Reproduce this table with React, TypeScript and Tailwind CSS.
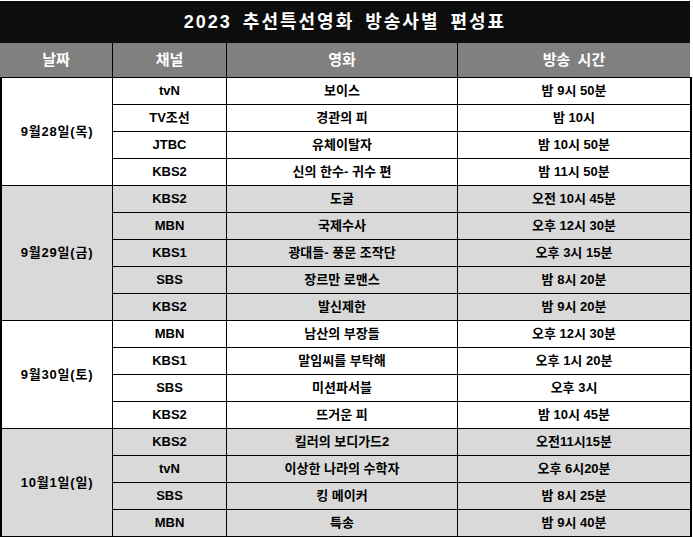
import React from "react";

type Row = { ch: string; movie: string; time: string };
type Group = { date: string; gray: boolean; rows: Row[] };

const groups: Group[] = [
  {
    date: "9월28일(목)",
    gray: false,
    rows: [
      { ch: "tvN", movie: "보이스", time: "밤 9시 50분" },
      { ch: "TV조선", movie: "경관의 피", time: "밤 10시" },
      { ch: "JTBC", movie: "유체이탈자", time: "밤 10시 50분" },
      { ch: "KBS2", movie: "신의 한수- 귀수 편", time: "밤 11시 50분" },
    ],
  },
  {
    date: "9월29일(금)",
    gray: true,
    rows: [
      { ch: "KBS2", movie: "도굴", time: "오전 10시 45분" },
      { ch: "MBN", movie: "국제수사", time: "오후 12시 30분" },
      { ch: "KBS1", movie: "광대들- 풍문 조작단", time: "오후 3시 15분" },
      { ch: "SBS", movie: "장르만 로맨스", time: "밤 8시 20분" },
      { ch: "KBS2", movie: "발신제한", time: "밤 9시 20분" },
    ],
  },
  {
    date: "9월30일(토)",
    gray: false,
    rows: [
      { ch: "MBN", movie: "남산의 부장들", time: "오후 12시 30분" },
      { ch: "KBS1", movie: "말임씨를 부탁해", time: "오후 1시 20분" },
      { ch: "SBS", movie: "미션파서블", time: "오후 3시" },
      { ch: "KBS2", movie: "뜨거운 피", time: "밤 10시 45분" },
    ],
  },
  {
    date: "10월1일(일)",
    gray: true,
    rows: [
      { ch: "KBS2", movie: "킬러의 보디가드2", time: "오전11시15분" },
      { ch: "tvN", movie: "이상한 나라의 수학자", time: "오후 6시20분" },
      { ch: "SBS", movie: "킹 메이커", time: "밤 8시 25분" },
      { ch: "MBN", movie: "특송", time: "밤 9시 40분" },
    ],
  },
];

const font = { fontFamily: '"Liberation Sans", "Noto Sans CJK KR", sans-serif' };

export default function App() {
  const cells: React.ReactNode[] = [];
  let rowStart = 1;
  groups.forEach((g, gi) => {
    const bg = g.gray ? "bg-[#d9d9d9]" : "bg-white";
    cells.push(
      <div
        key={`d${gi}`}
        className={`${bg} flex items-center justify-center col-start-1 tracking-[0.8px]`}
        style={{ gridRow: `${rowStart} / span ${g.rows.length}` }}
      >
        {g.date}
      </div>
    );
    g.rows.forEach((r, ri) => {
      const row = rowStart + ri;
      cells.push(
        <div key={`c${gi}-${ri}`} className={`${bg} flex items-center justify-center`} style={{ gridRow: row, gridColumn: 2 }}>
          {r.ch}
        </div>,
        <div key={`m${gi}-${ri}`} className={`${bg} flex items-center justify-center`} style={{ gridRow: row, gridColumn: 3 }}>
          {r.movie}
        </div>,
        <div key={`t${gi}-${ri}`} className={`${bg} flex items-center justify-center`} style={{ gridRow: row, gridColumn: 4 }}>
          {r.time}
        </div>
      );
    });
    rowStart += g.rows.length;
  });

  return (
    <div className="w-[693px] h-[537px] bg-white overflow-hidden" style={font}>
      <div className="h-px" />
      <div className="w-[690px] h-[42px] bg-[#0d0d0d] flex items-center justify-center text-white font-bold text-[18px] tracking-[2px] [word-spacing:4px]">
        2023 추선특선영화 방송사별 편성표
      </div>
      <div className="w-[690px] h-[34px] bg-black grid grid-cols-[112px_113px_230px_232px] gap-x-px text-white font-bold text-[15px] [word-spacing:3px]">
        <div className="bg-[#808080] flex items-center justify-center">날짜</div>
        <div className="bg-[#808080] flex items-center justify-center">채널</div>
        <div className="bg-[#808080] flex items-center justify-center">영화</div>
        <div className="bg-[#808080] flex items-center justify-center">방송 시간</div>
      </div>
      <div className="w-[692px] bg-black pl-[2px] pr-[2px] pt-px pb-px">
        <div className="grid grid-cols-[110px_113px_230px_232px] grid-rows-[repeat(17,26px)] gap-px text-[13px] font-bold text-black">
          {cells}
        </div>
      </div>
    </div>
  );
}
